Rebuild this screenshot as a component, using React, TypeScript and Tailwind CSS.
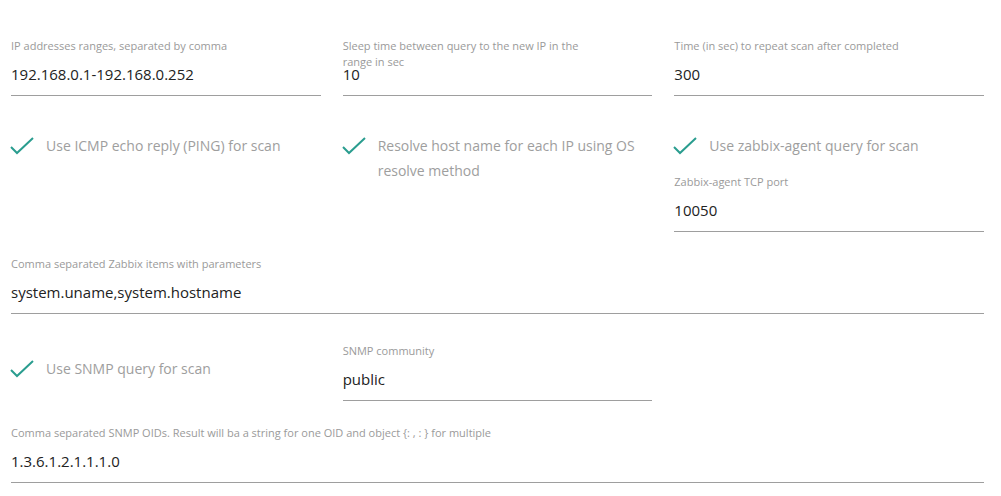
import React from "react";

const font = { fontFamily: '"Open Sans", "Noto Sans", Arial, sans-serif' };

const Field = ({
  label,
  value,
  labelClass = "",
}: {
  label: string;
  value: string;
  labelClass?: string;
}) => (
  <div className="flex flex-col border-b border-[#9e9e9e] pb-[5px]">
    <div className={`h-[20px] text-[11px] leading-[16px] text-[#9a9a9a] ${labelClass}`}>
      {label}
    </div>
    <div className="relative h-[32px] text-[15px] leading-[32px] text-[#222]">{value}</div>
  </div>
);

const Check = ({ label }: { label: string }) => (
  <div className="flex items-start gap-[12px]">
    <svg width="24" height="20" viewBox="0 0 24 20" className="mt-[3px] -ml-px shrink-0">
      <polyline points="1,11 7,17 23,2" fill="none" stroke="#2a9d8f" strokeWidth="2" />
    </svg>
    <span className="text-[14px] leading-[25px] text-[#9e9e9e]">{label}</span>
  </div>
);

export default function App() {
  return (
    <div className="min-h-[496px] bg-white pl-[11px] pr-[17px] pt-[38px]" style={font}>
      <div className="grid grid-cols-3 gap-x-[22px]">
        <Field label="IP addresses ranges, separated by comma" value="192.168.0.1-192.168.0.252" />
        <Field
          label="Sleep time between query to the new IP in the range in sec"
          labelClass="max-w-[245px]"
          value="10"
        />
        <Field label="Time (in sec) to repeat scan after completed" value="300" />
      </div>

      <div className="mt-[37px] grid grid-cols-3 gap-x-[22px]">
        <Check label="Use ICMP echo reply (PING) for scan" />
        <Check label="Resolve host name for each IP using OS resolve method" />
        <div className="flex flex-col gap-[16px]">
          <Check label="Use zabbix-agent query for scan" />
          <Field label="Zabbix-agent TCP port" value="10050" />
        </div>
      </div>

      <div className="mt-[24px]">
        <Field label="Comma separated Zabbix items with parameters" value="system.uname,system.hostname" />
      </div>

      <div className="mt-[29px] grid grid-cols-3 items-center gap-x-[22px]">
        <div className="-mt-[7px]">
          <Check label="Use SNMP query for scan" />
        </div>
        <Field label="SNMP community" value="public" />
        <div />
      </div>

      <div className="mt-[24px]">
        <Field
          label="Comma separated SNMP OIDs. Result will ba a string for one OID and object {: , : } for multiple"
          value="1.3.6.1.2.1.1.1.0"
        />
      </div>
    </div>
  );
}
